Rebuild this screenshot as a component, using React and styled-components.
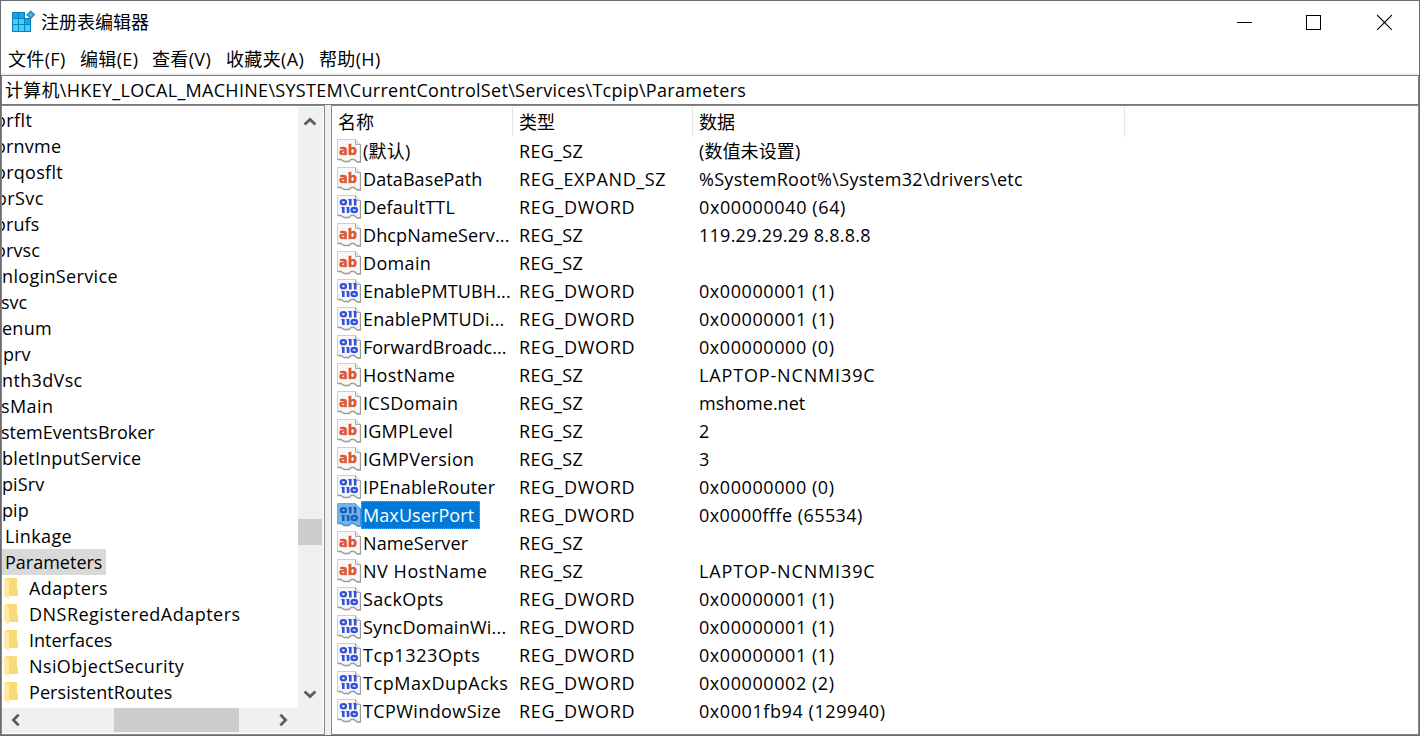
import React from 'react';
import styled, { createGlobalStyle, css } from 'styled-components';

const menus = ['文件(F)', '编辑(E)', '查看(V)', '收藏夹(A)', '帮助(H)'];
const menuWidths = [72, 72, 74, 93, 70];

// Keys scrolled partly out of the tree, with the offset of their visible part
const treeKeys = [
  { name: 'orflt', left: -7, spacing: 0.4 },
  { name: 'ornvme', left: -7, spacing: 0.2 },
  { name: 'orqosflt', left: -7, spacing: 0.3 },
  { name: 'orSvc', left: -6, spacing: 0.4 },
  { name: 'orufs', left: -7, spacing: 0.1 },
  { name: 'orvsc', left: -7, spacing: 0.1 },
  { name: 'nloginService', left: 0, spacing: 0.35 },
  { name: 'svc', left: -1 },
  { name: 'enum', left: 0, spacing: 0.25 },
  { name: 'prv', left: 1, spacing: 0.1 },
  { name: 'nth3dVsc', left: 0, spacing: 0.35 },
  { name: 'sMain', left: -1, spacing: 0.4 },
  { name: 'stemEventsBroker', left: -1 },
  { name: 'bletInputService', left: 0, spacing: 0.2 },
  { name: 'piSrv', left: 0, spacing: 0.1 },
  { name: 'pip', left: 0, spacing: 0.1 },
  { name: 'Linkage', left: 3, spacing: 0.4 },
  { name: 'Parameters', left: 3, current: true },
];

const subKeys = [
  { name: 'Adapters', spacing: 0.4 },
  { name: 'DNSRegisteredAdapters', spacing: 0.48 },
  { name: 'Interfaces', spacing: 0 },
  { name: 'NsiObjectSecurity', spacing: 0.4 },
  { name: 'PersistentRoutes', spacing: 0.08 },
];

const typeSpacing = { REG_SZ: 0.3, REG_DWORD: 0.7, REG_EXPAND_SZ: 0.6 };

const values = [
  { name: '(默认)', type: 'REG_SZ', data: '(数值未设置)', spacing: 0.25, dataSpacing: 0.1 },
  { name: 'DataBasePath', type: 'REG_EXPAND_SZ', data: '%SystemRoot%\\System32\\drivers\\etc', spacing: 0.1, dataSpacing: 0.31 },
  { name: 'DefaultTTL', type: 'REG_DWORD', data: '0x00000040 (64)', spacing: 0.15, dataSpacing: 0.6 },
  { name: 'DhcpNameServ...', type: 'REG_SZ', data: '119.29.29.29 8.8.8.8', spacing: 0.13, dataSpacing: 0.25 },
  { name: 'Domain', type: 'REG_SZ', data: '', spacing: 0.35 },
  { name: 'EnablePMTUBH...', type: 'REG_DWORD', data: '0x00000001 (1)', spacing: 0.13, dataSpacing: 0.57 },
  { name: 'EnablePMTUDi...', type: 'REG_DWORD', data: '0x00000001 (1)', spacing: 0.2, dataSpacing: 0.57 },
  { name: 'ForwardBroadc...', type: 'REG_DWORD', data: '0x00000000 (0)', spacing: 0, dataSpacing: 0.57 },
  { name: 'HostName', type: 'REG_SZ', data: 'LAPTOP-NCNMI39C', spacing: 0.35, dataSpacing: 0.85 },
  { name: 'ICSDomain', type: 'REG_SZ', data: 'mshome.net', spacing: 0.33, dataSpacing: 0 },
  { name: 'IGMPLevel', type: 'REG_SZ', data: '2', spacing: 0.2 },
  { name: 'IGMPVersion', type: 'REG_SZ', data: '3', spacing: 0.27 },
  { name: 'IPEnableRouter', type: 'REG_DWORD', data: '0x00000000 (0)', spacing: 0.2, dataSpacing: 0.57 },
  { name: 'MaxUserPort', type: 'REG_DWORD', data: '0x0000fffe (65534)', spacing: 0.09, dataSpacing: 0.44, selected: true },
  { name: 'NameServer', type: 'REG_SZ', data: '', spacing: 0.1 },
  { name: 'NV HostName', type: 'REG_SZ', data: 'LAPTOP-NCNMI39C', spacing: 0.55, dataSpacing: 0.85 },
  { name: 'SackOpts', type: 'REG_DWORD', data: '0x00000001 (1)', spacing: 0.35, dataSpacing: 0.57 },
  { name: 'SyncDomainWi...', type: 'REG_DWORD', data: '0x00000001 (1)', spacing: 0.22, dataSpacing: 0.57 },
  { name: 'Tcp1323Opts', type: 'REG_DWORD', data: '0x00000001 (1)', spacing: 0.6, dataSpacing: 0.57 },
  { name: 'TcpMaxDupAcks', type: 'REG_DWORD', data: '0x00000002 (2)', spacing: 0.55, dataSpacing: 0.57 },
  { name: 'TCPWindowSize', type: 'REG_DWORD', data: '0x0001fb94 (129940)', spacing: 0.4, dataSpacing: 0.58 },
];

const RegeditIcon = () => (
  <svg width="25" height="24" viewBox="0 0 25 24">
    <path d="M1 2h13v6h6v14H1z" fill="#0784bd" />
    <path d="M2 9h5v5H2zM8 9h5v5H8zM2 15h5v6H2zM8 15h5v6H8zM14 15h5v6h-5z" fill="#48ccf8" />
    <path d="M2 3h5v5H2zM8 3h5v5H8zM14 9h5v5h-5z" fill="#1ba5dc" />
    <path d="M19.6.2l4.7 4.4-4.4 4.7-4.8-4.4z" fill="#2d8ab7" />
    <path d="M19.6 2.6l2.3 2.1-2.1 2.3-2.3-2.1z" fill="#55bce4" />
  </svg>
);

const FolderIcon = () => (
  <svg width="16" height="22" viewBox="0 0 16 22">
    <path d="M2 1h11v11h1v7H2z" fill="#f9d978" />
    <path d="M0 1l5 3v18l-5-3z" fill="#ffe9a8" />
  </svg>
);

const ValueIcon = ({ binary, selected }) => (
  <svg width="24" height="24" viewBox="0 0 24 24">
    <path
      d="M.5.5h18l5 5v17.5h-3l-3.5-2.5h-3l-2 2h-5l-3-2H.5z"
      fill={selected ? '#73b4e9' : '#f8f8f8'}
      stroke={selected ? '#65a9df' : '#cecece'}
    />
    <path d="M18.5.5v5h5" fill={selected ? '#8bc0ea' : '#e4e4e4'} stroke={selected ? '#65a5da' : '#aaa'} />
    <path
      d="M23.5 5.5v17.5h-3l-3.5-2.5h-3l-2 2h-5l-3-2H.5"
      fill="none"
      stroke={selected ? '#4b92cd' : '#9b9b9b'}
      strokeWidth="1.3"
    />
    {binary ? (
      <g fill="none" stroke={selected ? '#175fc1' : '#3351df'} strokeWidth="2.3">
        <ellipse cx="6.4" cy="7.2" rx="2.6" ry="2.1" />
        <path d="M13.3 4v6.4M18.2 4v6.4M6.3 12v6M11.1 12v6" strokeWidth="2.6" />
        <path d="M11.3 4.7h2M16.2 4.7h2M4.3 12.7h2M9.2 12.7h2" strokeWidth="1.2" />
        <ellipse cx="17.2" cy="15.1" rx="2.7" ry="2.1" />
      </g>
    ) : (
      <IconText x="2" y="16" textLength="18" lengthAdjust="spacingAndGlyphs">ab</IconText>
    )}
  </svg>
);

const Chevron = ({ turn = 0 }) => (
  <svg width="14" height="14" viewBox="0 0 14 14">
    <path d="M1.6 9.6L7 4.4l5.4 5.2" fill="none" stroke="#5c5c5c" strokeWidth="2.8" transform={`rotate(${turn} 7 7)`} />
  </svg>
);

const App = () => (
  <>
    <GlobalStyle />
    <Window>
      <TitleBar>
        <RegeditIcon />
        <Title>注册表编辑器</Title>
        <WindowButtons>
          <svg width="15" height="16" viewBox="0 0 15 16" shapeRendering="crispEdges"><path d="M0 8.5h15" stroke="#000" /></svg>
          <svg width="15" height="16" viewBox="0 0 15 16" shapeRendering="crispEdges"><path d="M.5 1.5h14v14H.5z" fill="none" stroke="#000" /></svg>
          <svg width="15" height="16" viewBox="0 0 15 16"><path d="M0 1l15 15M15 1L0 16" stroke="#000" strokeWidth="1.1" /></svg>
        </WindowButtons>
      </TitleBar>
      <MenuBar>
        {menus.map((menu, index) => (
          <MenuItem key={menu} $width={menuWidths[index]}>{menu}</MenuItem>
        ))}
      </MenuBar>
      <AddressBar>计算机\HKEY_LOCAL_MACHINE\SYSTEM\CurrentControlSet\Services\Tcpip\Parameters</AddressBar>
      <Panes>
        <TreePane>
          <TreeBody>
            <Tree>
              {treeKeys.map((item) => (
                <TreeRow key={item.name}>
                  <TreeLabel $left={item.left} $current={item.current} $spacing={item.spacing}>{item.name}</TreeLabel>
                </TreeRow>
              ))}
              {subKeys.map((item) => (
                <TreeRow key={item.name} $nested>
                  <FolderIcon />
                  <Label $spacing={item.spacing}>{item.name}</Label>
                </TreeRow>
              ))}
            </Tree>
            <VerticalScroll>
              <Chevron />
              <VerticalThumb />
              <Chevron turn={180} />
            </VerticalScroll>
          </TreeBody>
          <HorizontalScroll>
            <Chevron turn={-90} />
            <HorizontalThumb />
            <Chevron turn={90} />
          </HorizontalScroll>
        </TreePane>
        <ValuePane>
          <HeaderRow>
            <HeaderCell>名称</HeaderCell>
            <HeaderCell>类型</HeaderCell>
            <HeaderCell>数据</HeaderCell>
          </HeaderRow>
          {values.map((value) => (
            <ValueRow key={value.name}>
              <NameCell>
                <ValueIcon binary={value.type === 'REG_DWORD'} selected={value.selected} />
                <ValueName $selected={value.selected} $spacing={value.spacing}>{value.name}</ValueName>
              </NameCell>
              <Cell $spacing={typeSpacing[value.type]}>{value.type}</Cell>
              <Cell $spacing={value.dataSpacing}>{value.data}</Cell>
            </ValueRow>
          ))}
        </ValuePane>
      </Panes>
    </Window>
  </>
);

export default App;

// Styled Components
const GlobalStyle = createGlobalStyle`
  * {
    box-sizing: border-box;
  }

  body {
    margin: 0;
    overflow: hidden;
    background: #fff;
  }

  svg {
    display: block;
    flex-shrink: 0;
  }
`;

const Window = styled.div`
  display: flex;
  flex-direction: column;
  width: 1420px;
  height: 736px;
  border: 1px solid #6c6c6e;
  background: #fff;
  color: #000;
  font-family: 'Open Sans', 'Noto Sans CJK SC', sans-serif;
  font-size: 18px;
  white-space: pre;
`;

const TitleBar = styled.header`
  display: flex;
  align-items: center;
  height: 42px;
  padding-left: 10px;
`;

const Title = styled.div`
  margin-left: 5px;
  line-height: 26px;
`;

const WindowButtons = styled.div`
  display: flex;
  gap: 55px;
  margin-left: auto;
  padding-right: 27px;

  svg:nth-child(2) {
    margin: 0 1px 0 -1px;
  }
`;

const MenuBar = styled.nav`
  display: flex;
  height: 32px;
  padding-left: 7px;
  border-bottom: 2px solid #f0f0f0;
  letter-spacing: 0.35px;
  line-height: 33px;
`;

const MenuItem = styled.div`
  width: ${props => props.$width}px;
`;

const AddressBar = styled.div`
  height: 30px;
  padding-left: 3px;
  border: 1px solid #7a7a7a;
  letter-spacing: 0.29px;
  line-height: 28px;
`;

const Panes = styled.main`
  display: flex;
  flex: 1;
  gap: 6px;
  min-height: 0;
  background: #f0f0f0;
`;

const TreePane = styled.section`
  display: flex;
  flex-direction: column;
  width: 324px;
  padding: 1px 1px 1px 0;
  border: 1px solid #828790;
  background: #fff;
`;

const TreeBody = styled.div`
  display: flex;
  height: 601px;
`;

const Tree = styled.div`
  width: 296px;
  overflow: hidden;
`;

const TreeRow = styled.div`
  display: flex;
  align-items: center;
  height: 26px;
  line-height: 26px;

  ${props => props.$nested && css`
    gap: 9px;
    padding-left: 2px;
  `}
`;

const Label = styled.span`
  letter-spacing: ${props => props.$spacing || 0}px;
`;

const TreeLabel = styled(Label)`
  ${props => props.$current
    ? css`
      padding: 0 4px 0 ${props.$left}px;
      background: #d9d9d9;
    `
    : css`
      margin-left: ${props.$left}px;
    `}
`;

const VerticalScroll = styled.div`
  display: flex;
  flex-direction: column;
  align-items: center;
  width: 25px;
  padding: 8px 1px 7px 0;
  background: #f0f0f0;
`;

const VerticalThumb = styled.div`
  width: 24px;
  height: 26px;
  margin: 390px 0 auto;
  background: #cdcdcd;
`;

const HorizontalScroll = styled.div`
  display: flex;
  align-items: center;
  height: 25px;
  padding: 0 33px 1px 7px;
  background: #f0f0f0;
`;

const HorizontalThumb = styled.div`
  width: 125px;
  height: 24px;
  margin: 0 auto 0 91px;
  background: #cdcdcd;
`;

const ValuePane = styled.section`
  flex: 1;
  padding-top: 1px;
  border: 1px solid #828790;
  background: #fff;
`;

const HeaderRow = styled.div`
  display: grid;
  grid-template-columns: 181px 180px 432px;
  grid-template-rows: 30px;
`;

const HeaderCell = styled.div`
  padding-left: 6px;
  border-right: 1px solid #e5e5e5;
  line-height: 31px;
`;

const ValueRow = styled.div`
  display: grid;
  grid-template-columns: 181px 180px 432px;
  height: 28px;
  line-height: 28px;
`;

const NameCell = styled.div`
  display: flex;
  align-items: center;
  padding-left: 5px;
`;

const ValueName = styled(Label)`
  height: 28px;
  padding: 0 2px;
  line-height: 28px;

  ${props => props.$selected && css`
    padding-right: 6px;
    background: #0078d7;
    outline: 1px dotted #e08a3c;
    outline-offset: -1px;
    color: #fff;
  `}
`;

const Cell = styled(Label)`
  padding-left: 6px;
`;

const IconText = styled.text`
  fill: #dc5535;
  stroke: #dc5535;
  stroke-width: 0.4px;
  font: bold 14px 'DejaVu Sans', sans-serif;
`;
